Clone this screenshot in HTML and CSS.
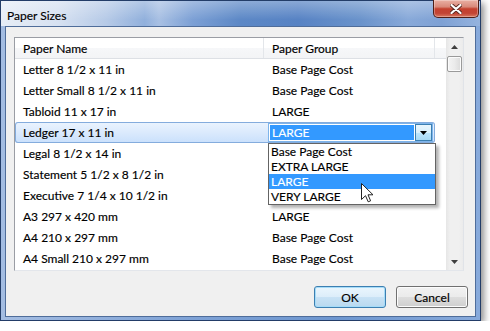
FILE: index.html
```html
<!DOCTYPE html>
<html>
<head>
<meta charset="utf-8">
<link rel="stylesheet" href="styles.css">
</head>
<body>
<div class="window">
  <div class="titlebar">
    <span class="title">Paper Sizes</span>
    <div class="close">
      <svg width="12" height="10" viewBox="0 0 12 10">
        <path d="M1.5 1 L10.5 9 M10.5 1 L1.5 9" stroke="#5b2a22" stroke-width="4" stroke-linecap="round"/>
        <path d="M1.5 1 L10.5 9 M10.5 1 L1.5 9" stroke="#ffffff" stroke-width="2.2" stroke-linecap="round"/>
      </svg>
    </div>
  </div>
  <div class="client">
    <div class="listview">
      <div class="lv-main">
        <div class="header">
          <div class="hcell c1">Paper Name</div>
          <div class="hcell c2">Paper Group</div>
          <div class="hfill"></div>
        </div>
        <div class="row"><div class="cell c1">Letter 8 1/2 x 11 in</div><div class="cell c2">Base Page Cost</div></div>
        <div class="row"><div class="cell c1">Letter Small 8 1/2 x 11 in</div><div class="cell c2">Base Page Cost</div></div>
        <div class="row"><div class="cell c1">Tabloid 11 x 17 in</div><div class="cell c2">LARGE</div></div>
        <div class="row sel">
          <div class="cell c1">Ledger 17 x 11 in</div>
          <div class="cell c2 edit">
            <div class="combo">
              <div class="cb-text">LARGE</div>
              <div class="cb-btn">
                <svg width="7" height="4" viewBox="0 0 7 4"><path d="M0 0 H7 L3.5 4 Z" fill="#000"/></svg>
              </div>
              <div class="droplist">
                <div class="item">Base Page Cost</div>
                <div class="item">EXTRA LARGE</div>
                <div class="item hl">LARGE</div>
                <div class="item">VERY LARGE</div>
              </div>
            </div>
          </div>
        </div>
        <div class="row"><div class="cell c1">Legal 8 1/2 x 14 in</div><div class="cell c2"></div></div>
        <div class="row"><div class="cell c1">Statement 5 1/2 x 8 1/2 in</div><div class="cell c2"></div></div>
        <div class="row"><div class="cell c1">Executive 7 1/4 x 10 1/2 in</div><div class="cell c2"></div></div>
        <div class="row"><div class="cell c1">A3 297 x 420 mm</div><div class="cell c2">LARGE</div></div>
        <div class="row"><div class="cell c1">A4 210 x 297 mm</div><div class="cell c2">Base Page Cost</div></div>
        <div class="row"><div class="cell c1">A4 Small 210 x 297 mm</div><div class="cell c2">Base Page Cost</div></div>
      </div>
      <div class="vscroll">
        <div class="sb-arrow">
          <svg width="7" height="4" viewBox="0 0 7 4"><path d="M0 4 H7 L3.5 0 Z" fill="#404040"/></svg>
        </div>
        <div class="sb-thumb"></div>
        <div class="sb-arrow bottom">
          <svg width="7" height="4" viewBox="0 0 7 4"><path d="M0 0 H7 L3.5 4 Z" fill="#404040"/></svg>
        </div>
      </div>
    </div>
    <div class="buttons">
      <button class="btn default">OK</button>
      <button class="btn">Cancel</button>
    </div>
  </div>
  <svg class="cursor" width="13" height="20" viewBox="0 0 13 20">
    <path d="M0.5 0.5 V16.5 L4.5 12.7 L7.2 18.8 L9.6 17.8 L7 11.8 H12 Z" fill="#ffffff" stroke="#222" stroke-width="1" stroke-linejoin="round"/>
  </svg>
</div>
</body>
</html>
```
FILE: styles.css
```css
* { box-sizing: border-box; }

body {
  margin: 0;
  background: #ffffff;
  font-family: Lato, "Liberation Sans", sans-serif;
  font-size: 12px;
  color: #000;
  -webkit-text-stroke: 0.15px #000;
}

.window {
  position: relative;
  width: 481px;
  height: 321px;
  border: 1px solid #233d68;
  display: flex;
  flex-direction: column;
  background: linear-gradient(90deg, #a4bde2 0%, #7ea2d6 40%, #6d96cf 70%, #88aadb 100%);
  box-shadow: 3px 3px 7px rgba(0, 0, 0, 0.45);
}

.titlebar {
  position: relative;
  height: 25px;
  flex: none;
  display: flex;
  align-items: center;
  padding-left: 6px;
  background:
    linear-gradient(180deg, rgba(255,255,255,0.3), rgba(255,255,255,0) 75%),
    linear-gradient(90deg, #e6edf6 0%, #d6e1f1 12%, #b6cae7 22%, #91b0dc 30%, #a8c0e3 33%, #7ca0d5 40%, #5c88c6 50%, #5783c4 62%, #6a93cb 75%, #88a9d9 85%, #7ea1d4 92%, #95b3de 100%);
}

.title {
  color: #000;
  font-size: 12px;
  padding-top: 3px;
}

.close {
  position: absolute;
  top: -1px;
  right: 1px;
  width: 46px;
  height: 18px;
  border: 1px solid #4e1e17;
  border-top: none;
  border-radius: 0 0 5px 5px;
  background: linear-gradient(180deg, #eab0a4 0%, #d98a7b 40%, #c4412f 52%, #c24434 78%, #d8785f 100%);
  box-shadow: inset 0 0 0 1px rgba(255, 255, 255, 0.3);
  display: flex;
  align-items: center;
  justify-content: center;
  -webkit-text-stroke: 0;
}

.client {
  flex: 1;
  margin: 0 4px 3px 4px;
  background: #f0f0f0;
  border: 1px solid #4f6d9a;
  display: flex;
  flex-direction: column;
  padding: 10px 7px 8px 8px;
}

.listview {
  width: 450px;
  height: 234px;
  flex: none;
  display: flex;
  border: 1px solid;
  border-color: #9a9da4 #e0e3e8 #e3e6eb #9a9da4;
  background: #fff;
}

.lv-main {
  width: 431px;
  flex: none;
  display: flex;
  flex-direction: column;
  background: #fff;
}

.header {
  height: 21px;
  display: flex;
  background: linear-gradient(180deg, #ffffff 0%, #ffffff 50%, #f6f7f9 51%, #f3f4f6 100%);
  border-bottom: 1px solid #dde0e5;
}

.hcell {
  line-height: 20px;
  padding-top: 1px;
  padding-left: 8px;
  border-right: 1px solid #e3e6ea;
  white-space: nowrap;
}

.hfill { flex: 1; }

.c1 { width: 249px; }
.c2 { width: 171px; }

.row {
  width: 420px;
  height: 21px;
  display: flex;
  flex: none;
}

.cell {
  line-height: 20px;
  padding-top: 1px;
  padding-left: 8px;
  white-space: nowrap;
}

.row.sel {
  background: linear-gradient(180deg, #ebf4fe 0%, #dbeafd 50%, #c9e0fc 100%);
  box-shadow: inset 0 0 0 1px #84acdd;
  border-radius: 3px;
}

.cell.edit {
  padding-left: 4px;
  padding-top: 1px;
}

.combo {
  position: relative;
  width: 165px;
  height: 19px;
  border: 1px solid #7eb4ea;
  background: #fff;
  display: flex;
  align-items: center;
  padding: 0 0 0 1px;
}

.cb-text {
  flex: 1;
  height: 15px;
  margin-right: 1px;
  background: #3399ff;
  color: #fff;
  -webkit-text-stroke: 0.15px #fff;
  line-height: 15px;
  padding-left: 2px;
}

.cb-btn {
  width: 17px;
  height: 17px;
  border: 1px solid #3c7fb1;
  background: linear-gradient(180deg, #eaf6fd 0%, #d9f0fc 50%, #bee6fd 51%, #a7d9f5 100%);
  display: flex;
  align-items: center;
  justify-content: center;
}

.droplist {
  position: absolute;
  top: 19px;
  left: -1px;
  width: 168px;
  border: 1px solid #646464;
  background: #fff;
  box-shadow: 3px 3px 3px rgba(0, 0, 0, 0.3);
  z-index: 5;
}

.item {
  height: 15px;
  line-height: 15px;
  padding-left: 2px;
  color: #000;
}

.item.hl {
  background: #3399ff;
  color: #fff;
  -webkit-text-stroke: 0.15px #fff;
}

.vscroll {
  width: 17px;
  flex: none;
  display: flex;
  flex-direction: column;
  align-items: center;
  background: linear-gradient(90deg, #e6e6e6 0%, #f0f0f0 25%, #f0f0f0 75%, #ebebeb 100%);
}

.sb-arrow {
  width: 17px;
  height: 17px;
  display: flex;
  align-items: center;
  justify-content: center;
}

.sb-arrow.bottom { margin-top: auto; }

.sb-thumb {
  margin-top: 1px;
  width: 15px;
  height: 16px;
  border: 1px solid #9a9a9a;
  border-radius: 2px;
  background: linear-gradient(90deg, #f4f4f4 0%, #ebebeb 50%, #dadada 100%);
  box-shadow: inset 0 0 0 1px #fbfbfb;
}

.buttons {
  margin-top: 15px;
  display: flex;
  justify-content: flex-end;
  gap: 10px;
}

.btn {
  width: 72px;
  height: 22px;
  border: 1px solid #707070;
  border-radius: 3px;
  background: linear-gradient(180deg, #f2f2f2 0%, #ebebeb 50%, #dddddd 51%, #cfcfcf 100%);
  box-shadow: inset 0 0 0 1px #fcfcfc;
  font-family: Lato, "Liberation Sans", sans-serif;
  font-size: 12px;
  color: #000;
  -webkit-text-stroke: 0.15px #000;
  padding: 0;
}

.btn.default {
  border-color: #3c7fb1;
  background: linear-gradient(180deg, #eaf6fd 0%, #dcedfa 50%, #c8e2f5 51%, #b9d9ef 100%);
  box-shadow: inset 0 0 0 1px #a6dcf8;
}

.cursor {
  position: absolute;
  left: 360px;
  top: 182px;
  z-index: 10;
}
```
